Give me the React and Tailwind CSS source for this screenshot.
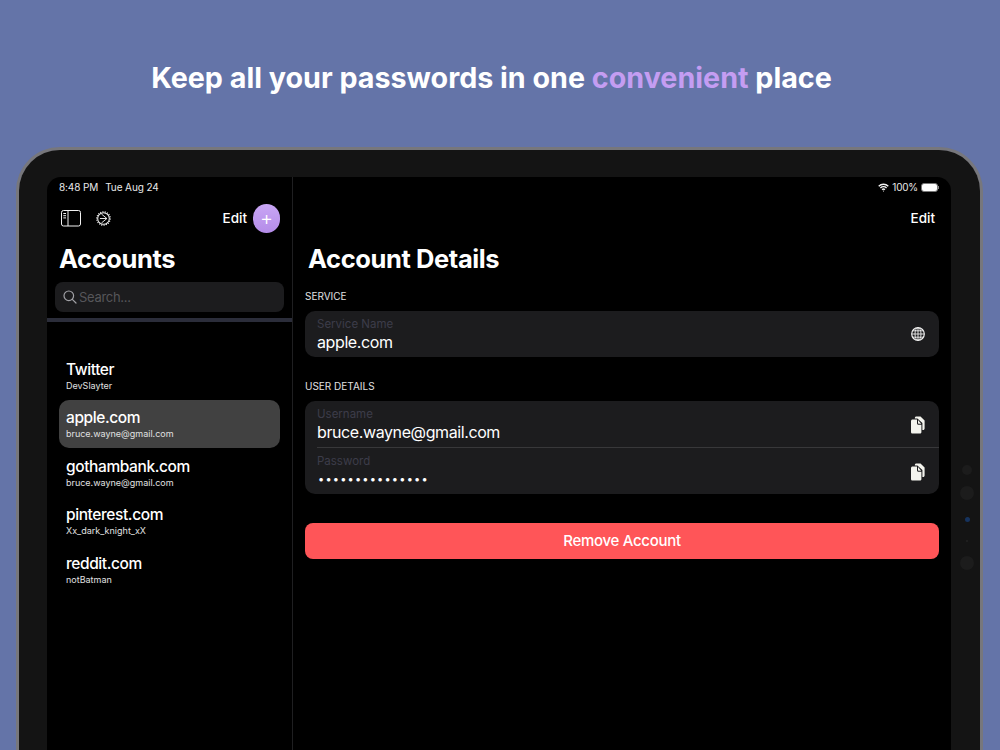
const accounts = [
  { name: "Twitter", user: "DevSlayter" },
  { name: "apple.com", user: "bruce.wayne@gmail.com", selected: true },
  { name: "gothambank.com", user: "bruce.wayne@gmail.com" },
  { name: "pinterest.com", user: "Xx_dark_knight_xX" },
  { name: "reddit.com", user: "notBatman" },
];

function SidebarIcon() {
  return (
    <svg width="20" height="17" viewBox="0 0 20 17" fill="none" stroke="#f2f2f2" strokeWidth="1">
      <rect x="0.5" y="0.5" width="19" height="15.5" rx="2" />
      <path d="M7 0.5V16" />
      <path d="M2.3 3.5H5M2.3 5.7H5M2.3 7.9H5" />
    </svg>
  );
}

function GearIcon() {
  return (
    <svg width="15" height="15" viewBox="0 0 16 16" fill="none" stroke="#f2f2f2">
      <circle cx="8" cy="8" r="6.2" strokeWidth="1.1" />
      <circle cx="8" cy="8" r="7.2" strokeWidth="1.2" strokeDasharray="1.2 1.3" />
      <path d="M5.8 3.2L11.6 8H4.2M11.6 8L5.8 12.8" strokeWidth="1" />
    </svg>
  );
}

function SearchIcon() {
  return (
    <svg width="14" height="14" viewBox="0 0 14 14" fill="none" stroke="#a1a1a6" strokeWidth="1.2">
      <circle cx="5.8" cy="5.8" r="4.8" />
      <path d="M9.3 9.3L13 13" strokeLinecap="round" />
    </svg>
  );
}

function WifiIcon() {
  return (
    <svg width="11" height="9" viewBox="0 0 11 9" fill="none" stroke="#f2f2f2" strokeWidth="1.4">
      <path d="M0.7 3.2C3.4 0.6 7.6 0.6 10.3 3.2" />
      <path d="M2.4 5C4.1 3.4 6.9 3.4 8.6 5" />
      <path d="M4.1 6.7C4.9 6 6.1 6 6.9 6.7" />
      <circle cx="5.5" cy="8" r="0.6" fill="#f2f2f2" stroke="none" />
    </svg>
  );
}

function GlobeIcon() {
  return (
    <svg width="14" height="14" viewBox="0 0 14 14" fill="none" stroke="#f0f0f0" strokeWidth="0.9">
      <circle cx="7" cy="7" r="6.3" strokeWidth="1.2" />
      <ellipse cx="7" cy="7" rx="3" ry="6.3" />
      <path d="M7 0.8V13.2M0.8 7H13.2M1.7 3.8H12.3M1.7 10.2H12.3" />
    </svg>
  );
}

function CopyIcon() {
  return (
    <svg className="mt-[2px]" width="14" height="18" viewBox="0 0 14 18" fill="#f4f4ee">
      <path d="M5 0.5H9.5L13.6 4.6V12.5C13.6 13.4 13 14 12.2 14H11.4V7L6.4 2.4H3.8C3.9 1.3 4.2 0.5 5 0.5Z" />
      <path d="M1.6 3.6H6V7.2C6 8.1 6.6 8.7 7.4 8.7H10.4V16C10.4 17 9.7 17.6 8.8 17.6H1.6C0.7 17.6 0 17 0 16V5.2C0 4.2 0.7 3.6 1.6 3.6Z" />
      <path d="M7 4L10.2 7.7H7.6C7.2 7.7 7 7.4 7 7Z" />
    </svg>
  );
}

function Field({ label, children, icon, divider, height }) {
  return (
    <div className={`pl-3 ${height}`}>
      <div className={`flex h-full items-center pr-[14px] ${divider ? "border-b border-[#38383a]" : ""}`}>
        <div className="flex h-full flex-1 flex-col pt-[5px]">
          <div className="text-[11.5px] leading-[16px] text-[#3c3c4a]">{label}</div>
          {children}
        </div>
        <div className="flex w-[14px] justify-center">{icon}</div>
      </div>
    </div>
  );
}

export default function App() {
  return (
    <div className="flex h-[750px] w-[1000px] flex-col overflow-hidden bg-[#6474a8] font-['Inter',sans-serif] text-white">
      <h1 className="flex h-[147px] shrink-0 items-start justify-center pt-[61px] pr-[17px] text-[28.7px] leading-[34px] font-bold">
        <span>
          Keep all your passwords in one <span className="text-[#c49df2]">convenient</span> place
        </span>
      </h1>

      <div className="relative mr-[17px] ml-[16px] flex-1 rounded-t-[44px] border-x-[3px] border-t-[3px] border-[#77777c] bg-[#141414] pt-[27px] pr-[29px] pl-[28px]">
        <div className="flex h-full overflow-hidden rounded-t-[14px] bg-black">
          {/* sidebar */}
          <aside className="flex w-[246px] shrink-0 flex-col border-r border-[#1f1f21]">
            <div className="flex h-[20px] items-center gap-[7px] pl-3 text-[10px] tracking-[-0.1px] text-[#e8e8e8]">
              <span>8:48 PM</span>
              <span>Tue Aug 24</span>
            </div>
            <div className="flex h-[42px] items-center pr-3 pl-[14px]">
              <SidebarIcon />
              <div className="ml-[15px]">
                <GearIcon />
              </div>
              <span className="ml-auto text-[13.5px] font-medium">Edit</span>
              <div className="ml-[6px] flex h-[29px] w-[27px] items-center justify-center rounded-full bg-gradient-to-b from-[#c9a6f5] to-[#b48ce8] text-[20px] leading-none font-light">
                +
              </div>
            </div>
            <div className="pt-[3px] pl-3 text-[25.5px] leading-[34px] font-bold tracking-[-0.4px]">Accounts</div>
            <div className="mx-2 mt-[6px] flex h-[30px] items-center gap-[2px] rounded-lg bg-[#1c1c1e] px-2">
              <SearchIcon />
              <span className="pt-[1px] text-[13px] tracking-[-0.3px] text-[#56565a]">Search...</span>
            </div>
            <div className="mt-[6px] h-[4px] bg-[#2b2d3a]" />
            <div className="mt-[29px] flex flex-col px-3">
              {accounts.map((a) => (
                <div
                  key={a.name}
                  className={`flex h-[48.5px] flex-col justify-center rounded-[10px] pt-[1px] pl-[7px] ${a.selected ? "bg-[#414141]" : ""}`}
                >
                  <div className="text-[15.5px] leading-[19px] font-medium tracking-[-0.4px]">{a.name}</div>
                  <div className="text-[9px] leading-[13px] text-[#e0e0e0]">{a.user}</div>
                </div>
              ))}
            </div>
          </aside>

          {/* detail */}
          <main className="flex min-w-0 flex-1 flex-col px-3">
            <div className="flex h-[20px] items-center justify-end gap-[3px] text-[10px] tracking-[-0.2px] text-[#e8e8e8]">
              <WifiIcon />
              <span>100%</span>
              <div className="flex items-center">
                <div className="h-[9px] w-[17px] rounded-[3px] border border-[#777] bg-white" />
                <div className="h-[3px] w-[1px] bg-[#888]" />
              </div>
            </div>
            <div className="flex h-[42px] items-center justify-end pr-[4px] text-[13.5px] font-medium">Edit</div>
            <div className="pt-[3px] pl-[3px] text-[25.5px] leading-[34px] font-bold tracking-[-0.4px]">Account Details</div>
            <div className="mt-[13px] text-[10px] leading-[14px] text-[#e0e0e0]">SERVICE</div>
            <div className="mt-[8px] rounded-[10px] bg-[#1c1c1e]">
              <Field label="Service Name" icon={<GlobeIcon />} height="h-[46px]">
                <div className="text-[16px] leading-[20px] tracking-[-0.4px]">apple.com</div>
              </Field>
            </div>
            <div className="mt-[22px] text-[10px] leading-[14px] text-[#e0e0e0]">USER DETAILS</div>
            <div className="mt-[8px] rounded-[10px] bg-[#1c1c1e]">
              <Field label="Username" icon={<CopyIcon />} divider height="h-[46.5px]">
                <div className="text-[16px] leading-[20px] tracking-[-0.4px]">bruce.wayne@gmail.com</div>
              </Field>
              <Field label="Password" icon={<CopyIcon />} height="h-[46.5px]">
                <div className="pl-[1px] text-[11px] leading-[20px] tracking-[1.2px]">•••••••••••••••</div>
              </Field>
            </div>
            <div className="mt-[29px] flex h-[36px] items-center justify-center rounded-[8px] bg-[#ff5558] pt-[1px] text-[15px] font-medium tracking-[-0.3px]">
              Remove Account
            </div>
          </main>
        </div>

        {/* camera dots on the bezel */}
        <div className="absolute top-[315px] right-[6px] flex w-[14px] flex-col items-center">
          <div className="h-[10px] w-[10px] rounded-full bg-[#1c1c1c]" />
          <div className="mt-[11px] h-[14px] w-[14px] rounded-full bg-[#1c1c1c]" />
          <div className="mt-[16.5px] h-[5px] w-[5px] rounded-full bg-[#16335e]" />
          <div className="mt-[18.5px] h-[2px] w-[2px] rounded-full bg-[#222]" />
          <div className="mt-[14px] h-[14px] w-[14px] rounded-full bg-[#1c1c1c]" />
        </div>
      </div>
    </div>
  );
}
